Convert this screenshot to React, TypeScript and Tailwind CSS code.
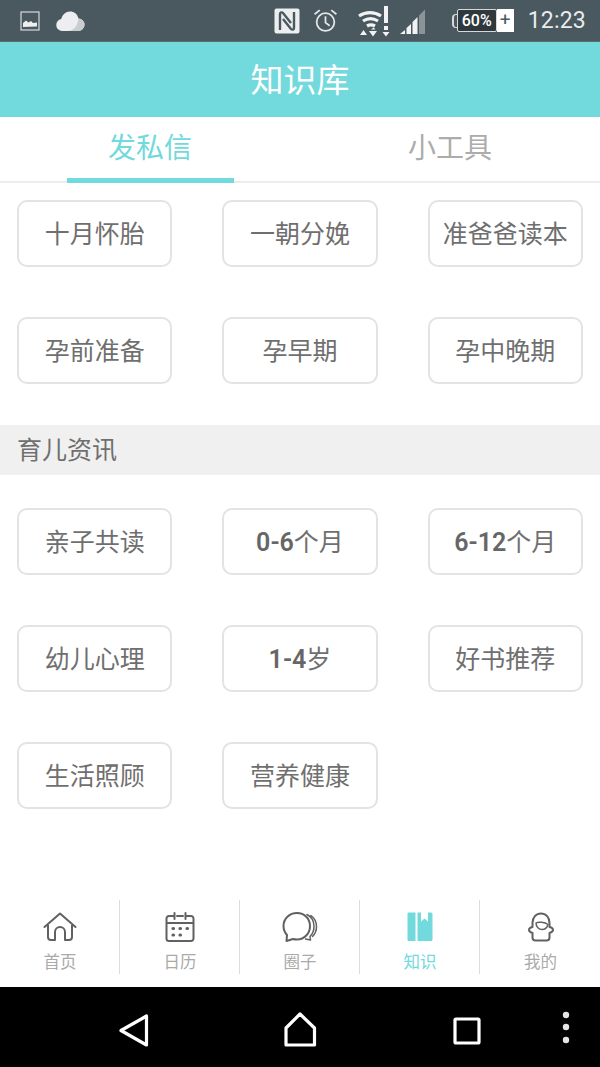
const cjk = 'font-["Roboto","Noto_Sans_CJK_SC",sans-serif]';

const group1 = ['十月怀胎', '一朝分娩', '准爸爸读本', '孕前准备', '孕早期', '孕中晚期'];
const group2 = ['亲子共读', '0-6|个月', '6-12|个月', '幼儿心理', '1-4|岁', '好书推荐', '生活照顾', '营养健康'];

function StatusBar() {
  return (
    <div className="h-[42px] bg-[#4a585f] flex items-center justify-between pl-[19px] pr-[14px] border-b border-[#5d6b70]">
      <div className="flex items-center gap-[14px]">
        <svg width="22" height="22" viewBox="0 0 22 22">
          <rect x="2" y="2" width="18" height="18" fill="none" stroke="#d5d9db" strokeWidth="1.200" />
          <path d="M4 17v-4l3-2.500 2.500 2 2.500-1.500 2 2 4-.5v4z" fill="#eceeef" />
        </svg>
        <svg width="30" height="22" viewBox="0 0 30 22">
          <path d="M7 21a6 6 0 0 1-.8-11.900A9 9 0 0 1 15 1.500c4 0 7.500 2.500 8.500 7a6.200 6.200 0 0 1-.5 12.500z" fill="#eceeef" />
          <path d="M23.500 8.500a6.200 6.200 0 0 1-.5 12.500H12c6 0 10-3 11.500-12.500z" fill="#c9cdcf" />
        </svg>
      </div>
      <div className="flex items-center">
        <svg width="26" height="26" viewBox="0 0 26 26" className="mr-[13px]">
          <rect x="0.500" y="0.500" width="25" height="25" rx="2" fill="#eceeef" />
          <path d="M6 22V6c0-2 2-2 3-1l8 10M20 4v16c0 2-2 2-3 1L9 11" fill="none" stroke="#4a585f" strokeWidth="2.400" />
        </svg>
        <svg width="25" height="25" viewBox="0 0 24 24" className="mr-[20px]" fill="none" stroke="#e3e6e7" strokeWidth="1.700">
          <circle cx="12" cy="13.500" r="8.500" />
          <path d="M12 8v6l4 3M1.500 6l5-4M22.500 6l-5-4" />
        </svg>
        <svg width="32" height="32" viewBox="0 0 32 32" className="mr-[10px]">
          <path d="M1 11a20 20 0 0 1 22 0M5 16a14 14 0 0 1 15 0M9 21a8 8 0 0 1 8 0" fill="none" stroke="#f2f3f4" strokeWidth="3.200" />
          <path d="M13 24.500l2.500-2 2 2zM2 30l3.500-5 3.500 5zM11 26h8l-4 5.500zM26 1h4v17h-4zM26 21h4v4h-4zM24.500 27h7l-3.500 4.500z" fill="#f2f3f4" />
        </svg>
        <svg width="26" height="26" viewBox="0 0 26 26" className="mr-[26px]">
          <path d="M0 26l5-4v4zM6.500 26v-6l4.500-4v10zM12.500 26V14l5-5v17z" fill="#f2f3f4" />
          <path d="M19 26V7.500l6-6V26z" fill="#8a9498" />
        </svg>
        <div className="flex items-center mr-[14px]">
          <div className="w-[5px] h-[14px] border-l-2 border-y border-[#d5d9db] rounded-l-sm"></div>
          <div className={`w-[40px] h-[23px] border border-[#d5d9db] bg-[#2f383c] text-white text-[16px] font-medium leading-[21px] text-center rounded-[2px] ${cjk}`}>60%</div>
          <div className="w-[17px] h-[23px] bg-white text-[#4a585f] text-[19px] leading-[22px] text-center font-['Roboto',sans-serif]">+</div>
        </div>
        <span className="text-[#e9ebec] text-[23px] leading-none tracking-[0.2px] font-['Roboto',sans-serif]">12:23</span>
      </div>
    </div>
  );
}

function TagGrid({ items }: { items: string[] }) {
  return (
    <div className="grid grid-cols-3 gap-x-[50px] gap-y-[50px]">
      {items.map((t) => {
        const parts = t.split('|');
        return (
          <div
            key={t}
            className="h-[67px] pt-[2px] border-2 border-[#e3e3e3] rounded-[10px] flex items-center justify-center text-[#6f6f6f] text-[25px]"
          >
            {parts.length > 1 ? (
              <>
                <span className="font-semibold text-[#666666]">{parts[0]}</span>
                <span>{parts[1]}</span>
              </>
            ) : (
              t
            )}
          </div>
        );
      })}
    </div>
  );
}

function NavItem({ label, active, icon, divider }: { label: string; active?: boolean; icon: React.ReactNode; divider?: boolean }) {
  return (
    <div className={`w-[120px] h-[74px] pl-[1px] flex flex-col items-center ${divider ? 'border-r border-[#dcdcdc]' : ''}`}>
      <div className="h-[36px] mt-[9px] flex items-center justify-center">{icon}</div>
      <span className={`text-[16.500px] leading-[20px] mt-[8px] ${active ? 'text-[#72d9dc]' : 'text-[#aaaaaa]'}`}>{label}</span>
    </div>
  );
}

const stroke = { fill: 'none', stroke: '#616161', strokeWidth: 2, strokeLinecap: 'round', strokeLinejoin: 'round' } as const;

export default function App() {
  return (
    <div className={`w-[600px] h-[1067px] bg-white flex flex-col overflow-hidden ${cjk}`}>
      <StatusBar />
      <div className="h-[75px] pt-[2px] bg-[#72d9dc] flex items-center justify-center text-white text-[33px]">知识库</div>

      <div className="h-[66px] flex border-b-2 border-[#ececec]">
        <div className="w-[300px] flex justify-center">
          <div className="w-[167px] h-[66px] pt-[2px] border-b-[5px] border-[#72d9dc] text-[#72d9dc] text-[28px] flex items-center justify-center">发私信</div>
        </div>
        <div className="w-[300px] flex items-center justify-center text-[#acacac] text-[28px] pb-[1px]">小工具</div>
      </div>

      <div className="px-[17px] pt-[17px]">
        <TagGrid items={group1} />
      </div>

      <div className="mt-[41px] h-[50px] pt-[2px] bg-[#f0f0f0] flex items-center px-[17px] text-[#6f6f6f] text-[25px]">育儿资讯</div>

      <div className="px-[17px] pt-[33px]">
        <TagGrid items={group2} />
      </div>

      <div className="flex-1 flex items-end">
        <div className="w-full h-[87px] flex">
          <NavItem
            label="首页"
            divider
            icon={
              <svg width="34" height="30" viewBox="0 0 34 30" {...stroke}>
                <path d="M1.500 15L17 1.500 32.500 15M5 13v12a3 3 0 0 0 3 3h4V20a5 5 0 0 1 10 0v8h4a3 3 0 0 0 3-3V13" />
              </svg>
            }
          />
          <NavItem
            label="日历"
            divider
            icon={
              <svg width="30" height="32" viewBox="0 0 30 32" {...stroke}>
                <path d="M8 5H4a2.500 2.500 0 0 0-2.500 2.500v20A2.500 2.500 0 0 0 4 30h22a2.500 2.500 0 0 0 2.500-2.500v-20A2.500 2.500 0 0 0 26 5h-4M12 5h6M9.500 2v6M20.500 2v6M1.500 12h27" />
                <path d="M8 17.500h.5M15 17.500h.5M22 17.500h.5M8 24h.5M15 24h.5" strokeWidth="3.200" />
              </svg>
            }
          />
          <NavItem
            label="圈子"
            divider
            icon={
              <svg width="36" height="32" viewBox="0 0 36 32" {...stroke}>
                <path d="M15 2C7.500 2 1.500 7.500 1.500 15c0 3.500 1.200 6.500 3.500 9l-.5 6 6.500-2c1.300.4 2.600.5 4 .5 7.500 0 13-6 13-13.500S22.500 2 15 2z" />
                <path d="M25 3.500c5 2.500 7 7 7 12 0 4-1.500 7.500-4 10l.5 3.500-5-1M29 4.500c3.500 2.500 5.500 6.500 5.500 11 0 4-1.500 7.500-4 10" strokeWidth="1.500" />
              </svg>
            }
          />
          <NavItem
            label="知识"
            active
            divider
            icon={
              <svg width="26" height="30" viewBox="0 0 26 30">
                <path d="M0.500 1.500a1 1 0 0 1 1-1h7v28.500h-7a1 1 0 0 1-1-1z" fill="#72d9dc" />
                <path d="M10.500 .5h3.500v9l3.500-3 3.500 3v-9h3a1.500 1.500 0 0 1 1.500 1.500v25.500a1.500 1.500 0 0 1-1.500 1.500H10.500z" fill="#72d9dc" />
              </svg>
            }
          />
          <NavItem
            label="我的"
            icon={
              <svg width="26" height="30" viewBox="0 0 26 30" {...stroke}>
                <path d="M4.500 15V11C4.500 5.500 8 1.500 13 1.500S21.500 5.500 21.500 11v4c1.500.3 3.500 1.500 3.500 3s-2 2.500-3.500 3v4.500a3 3 0 0 1-3 3h-11a3 3 0 0 1-3-3V21c-1.500-.5-3.500-1.500-3.500-3s2-2.700 3.500-3z" />
                <path d="M8 11c2-1.500 9-1 12 1.500-1 3.500-4 5-6 5-3 0-6-2.500-6-6.500z" strokeWidth="1.500" />
              </svg>
            }
          />
        </div>
      </div>

      <div className="h-[80px] bg-black flex-none flex items-center">
        <svg width="600" height="80" viewBox="0 0 600 80" fill="none" stroke="#fff" strokeWidth="3.200" strokeLinejoin="round">
          <path d="M121 43.500L146.500 29v29z" />
          <path d="M286 41l14-14 14.500 14v17H286z" />
          <rect x="455" y="32" width="24" height="24" rx="1" />
          <g fill="#e5e5e5" stroke="none">
            <circle cx="566" cy="28" r="3.200" />
            <circle cx="566" cy="40" r="3.200" />
            <circle cx="566" cy="53" r="3.200" />
          </g>
        </svg>
      </div>
    </div>
  );
}
